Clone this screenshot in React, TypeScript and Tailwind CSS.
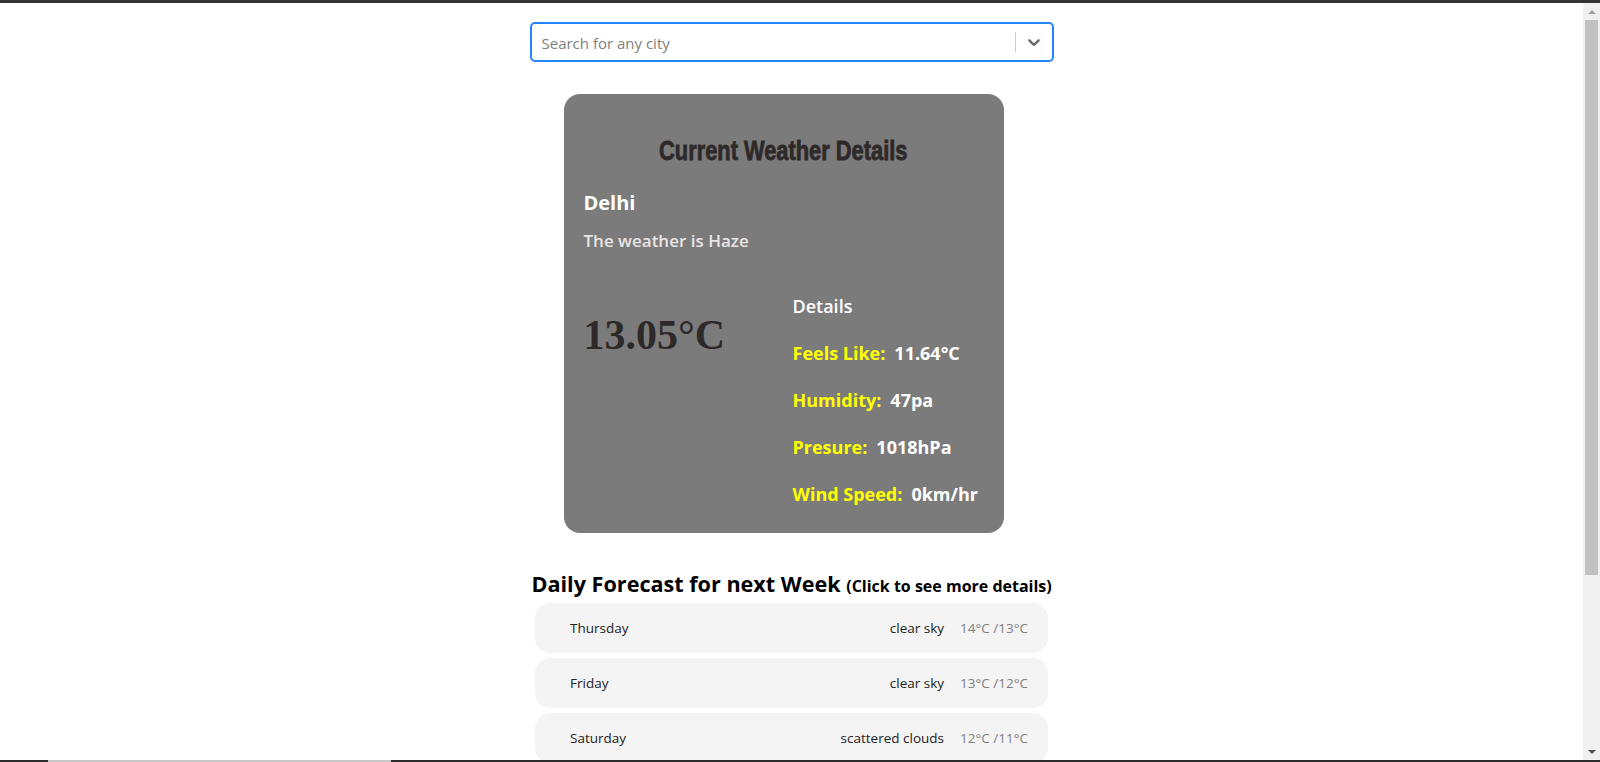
import React, { useState } from 'react';

type Day = {
  name: string;
  desc: string;
  max: number;
  min: number;
};

const forecast: Day[] = [
  { name: 'Thursday', desc: 'clear sky', max: 14, min: 13 },
  { name: 'Friday', desc: 'clear sky', max: 13, min: 12 },
  { name: 'Saturday', desc: 'scattered clouds', max: 12, min: 11 },
  { name: 'Sunday', desc: 'broken clouds', max: 12, min: 11 },
  { name: 'Monday', desc: 'overcast clouds', max: 13, min: 12 },
  { name: 'Tuesday', desc: 'clear sky', max: 14, min: 13 },
  { name: 'Wednesday', desc: 'clear sky', max: 15, min: 13 },
];

const details = [
  { label: 'Feels Like:', value: '11.64°C' },
  { label: 'Humidity:', value: '47pa' },
  { label: 'Presure:', value: '1018hPa' },
  { label: 'Wind Speed:', value: '0km/hr' },
];

const Search = () => {
  const [query, setQuery] = useState('');
  return (
    <div className="flex h-[40px] w-[524px] items-center rounded-[5px] border-2 border-[#2684ff] bg-white">
      <input
        value={query}
        onChange={e => setQuery(e.target.value)}
        placeholder="Search for any city"
        className="h-full flex-1 bg-transparent pl-[10px] pt-[1px] text-[15px] text-[#333] outline-none placeholder:text-[#808080]"
      />
      <span className="h-[20px] w-px bg-[#ccc]" />
      <div className="flex h-full w-[36px] items-center justify-center">
        <svg viewBox="0 0 20 20" className="h-[20px] w-[20px] fill-[#666]">
          <path d="M4.516 7.548c0.436-0.446 1.043-0.481 1.576 0l3.908 3.747 3.908-3.747c0.533-0.481 1.141-0.446 1.574 0 0.436 0.445 0.408 1.197 0 1.615-0.406 0.418-4.695 4.502-4.695 4.502-0.217 0.223-0.502 0.335-0.787 0.335s-0.57-0.112-0.789-0.335c0 0-4.287-4.084-4.695-4.502s-0.436-1.17 0-1.615z" />
        </svg>
      </div>
    </div>
  );
};

const CurrentWeather = () => (
  <div className="ml-[34px] mt-[32px] w-[440px] rounded-[16px] bg-[#7b7b7b] px-[20px] pb-[28px] pt-[42px]">
    <div className="flex justify-center">
      <h2 className="inline-block scale-x-[0.78] whitespace-nowrap font-['Liberation_Sans',sans-serif] text-[28px] font-bold leading-[30px] text-[#2d2929] [-webkit-text-stroke:0.8px_#2d2929]">
        Current Weather Details
      </h2>
    </div>
    <h3 className="mt-[25px] text-[20px] font-bold leading-[24px] text-white">Delhi</h3>
    <p className="mt-[16px] text-[17px] font-semibold leading-[20px] text-[#e9e4e4]">The weather is Haze</p>

    <div className="mt-[44px] flex">
      <div className="w-[209px] pt-[20px] font-['Liberation_Serif',serif] text-[42px] font-bold leading-[40px] text-[#2d2929]">
        13.05°C
      </div>
      <div className="flex-1">
        <div className="text-[18px] font-semibold leading-[22px] text-white">Details</div>
        {details.map(d => (
          <div key={d.label} className="mt-[25px] whitespace-nowrap text-[18px] font-bold leading-[22px]">
            <span className="text-[#ffff00]">{d.label}</span>
            <span className="ml-[9px] text-white">{d.value}</span>
          </div>
        ))}
      </div>
    </div>
  </div>
);

const Forecast = () => (
  <div className="mt-[38px]">
    <h2 className="whitespace-nowrap pl-[2px] text-[21.6px] font-bold leading-[26px] text-black">
      Daily Forecast for next Week <span className="text-[16px]">(Click to see more details)</span>
    </h2>
    <div className="mt-[4px] flex flex-col items-center gap-[5px]">
      {forecast.map(day => (
        <button
          key={day.name}
          className="flex h-[50px] w-[513px] items-center rounded-[15px] bg-[#f4f4f4] pl-[35px] pr-[20px] text-[13.5px] text-[#222]"
        >
          <span className="flex-1 text-left">{day.name}</span>
          <span>{day.desc}</span>
          <span className="ml-[16px] text-[#808080]">
            {day.max}°C /{day.min}°C
          </span>
        </button>
      ))}
    </div>
  </div>
);

const Scrollbar = () => (
  <div className="flex w-[17px] flex-col bg-[#f0f0f0]">
    <div className="flex h-[17px] items-center justify-center">
      <svg viewBox="0 0 8 4" className="h-[4px] w-[8px] fill-[#a3a3a3]">
        <polygon points="0,4 4,0 8,4" />
      </svg>
    </div>
    <div className="flex-1 px-[2px]">
      <div className="h-[555px] bg-[#c1c1c1]" />
    </div>
    <div className="flex h-[17px] items-center justify-center">
      <svg viewBox="0 0 8 4" className="h-[4px] w-[8px] fill-[#505050]">
        <polygon points="0,0 8,0 4,4" />
      </svg>
    </div>
  </div>
);

export default function App() {
  return (
    <div className="flex h-screen flex-col overflow-hidden bg-white font-['Open_Sans','Noto_Sans',sans-serif]">
      <div className="h-[3px] bg-[#333]" />
      <div className="flex min-h-0 flex-1">
        <main className="min-w-0 flex-1 overflow-hidden">
          <div className="mx-auto w-[524px] pt-[19px]">
            <Search />
            <CurrentWeather />
            <Forecast />
          </div>
        </main>
        <Scrollbar />
      </div>
      <div className="flex h-[2px] bg-[#2b2b2b]">
        <div className="ml-[48px] w-[343px] bg-[#c8c8c8]" />
      </div>
    </div>
  );
}
